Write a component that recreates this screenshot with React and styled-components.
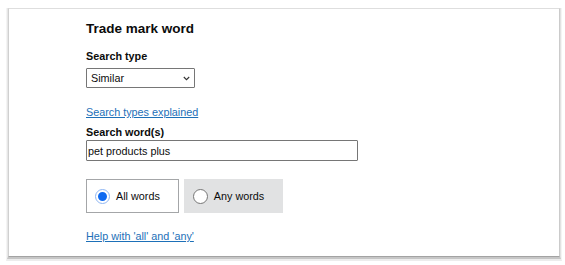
import React from "react";
import styled, { createGlobalStyle } from "styled-components";

const GlobalStyle = createGlobalStyle`
  html, body {
    background: #ffffff;
  }
  body {
    margin: 8px 3px 0 6px;
    font-family: "Liberation Sans", Arial, sans-serif;
    color: #0b0c0c;
  }
`;

const ShadowOuter = styled.div`
  width: 556px;
  box-sizing: border-box;
  border-left: 1px solid #f4f4f4;
  border-right: 1px solid #f4f4f4;
  border-bottom: 2px solid #ececec;
  box-shadow: 0 2px 5px rgba(0, 0, 0, 0.12);
`;

const ShadowInner = styled.div`
  border-left: 1px solid #e6e6e6;
  border-right: 1px solid #e2e2e2;
  border-bottom: 2px solid #c6c6c6;
`;

const Card = styled.div`
  box-sizing: border-box;
  padding: 12px 0 13px 77px;
  background: #ffffff;
  border: 1px solid #dedede;
  border-left-color: #d0d0d0;
  border-right-color: #cbcbcb;
  border-bottom-color: #a3a3a3;
  display: flex;
  flex-direction: column;
  align-items: flex-start;
`;

const Title = styled.h2`
  margin: 0 0 12px;
  font-size: 13.5px;
  line-height: 16px;
  font-weight: 700;
`;

const Label = styled.label`
  display: block;
  margin-top: ${(p) => p.$top || 0}px;
  font-size: 10.8px;
  line-height: 14px;
  font-weight: 700;
`;

const SelectWrap = styled.div`
  position: relative;
  width: 109px;
  height: 20px;
  margin-top: 5px;
`;

const Select = styled.select`
  appearance: none;
  -webkit-appearance: none;
  width: 100%;
  height: 100%;
  box-sizing: border-box;
  margin: 0;
  padding: 0 0 0 4px;
  border: 1px solid #767676;
  border-radius: 1px;
  background: #ffffff;
  color: #0b0c0c;
  font-family: inherit;
  font-size: 10.8px;
  outline: none;
`;

const Chevron = styled.svg`
  position: absolute;
  right: 5px;
  top: 8px;
  width: 7px;
  height: 5px;
  pointer-events: none;
`;

const Link = styled.a`
  display: block;
  margin-top: ${(p) => p.$top || 0}px;
  font-size: 10.8px;
  line-height: 14px;
  color: #1d70b8;
  text-decoration: underline;
  text-underline-offset: 1px;
`;

const TextInput = styled.input`
  width: 272px;
  height: 21px;
  box-sizing: border-box;
  margin: 1px 0 0;
  padding: 0 0 0 1px;
  border: 1px solid #767676;
  border-radius: 1px;
  background: #ffffff;
  color: #0b0c0c;
  font-family: inherit;
  font-size: 10.8px;
  outline: none;
`;

const RadioRow = styled.div`
  display: flex;
  gap: 5px;
  margin-top: 18px;
`;

const RadioOption = styled.label`
  display: flex;
  align-items: center;
  gap: 6px;
  height: 34px;
  box-sizing: border-box;
  padding: 0 18px 0 8px;
  border: 1px solid ${(p) => (p.$checked ? "#a4a6a8" : "transparent")};
  background: ${(p) => (p.$checked ? "#ffffff" : "#e1e2e3")};
  font-size: 10.8px;
  line-height: 14px;
  color: #0b0c0c;
`;

const RadioDot = styled.span`
  width: 15px;
  height: 15px;
  box-sizing: border-box;
  border-radius: 50%;
  border: ${(p) => (p.$checked ? "3px solid #ffffff" : "1px solid #767676")};
  background: ${(p) => (p.$checked ? "#0f6af0" : "#ffffff")};
  flex: none;
  position: relative;

  &::after {
    content: "";
    display: ${(p) => (p.$checked ? "block" : "none")};
    position: absolute;
    inset: -3px;
    border-radius: 50%;
    border: 1px solid #8fb6f3;
  }
`;

const options = [
  { label: "All words", checked: true },
  { label: "Any words", checked: false },
];

export default function App() {
  return (
    <>
      <GlobalStyle />
      <ShadowOuter>
        <ShadowInner>
          <Card>
            <Title>Trade mark word</Title>
            <Label>Search type</Label>
            <SelectWrap>
              <Select defaultValue="similar">
                <option value="similar">Similar</option>
                <option value="exact">Exact</option>
              </Select>
              <Chevron viewBox="0 0 7 5">
                <path d="M0.8 1 L3.5 3.7 L6.2 1" fill="none" stroke="#333" strokeWidth="1.1" />
              </Chevron>
            </SelectWrap>
            <Link href="#" $top={17}>Search types explained</Link>
            <Label $top={6}>Search word(s)</Label>
            <TextInput defaultValue="pet products plus" />
            <RadioRow>
              {options.map((o) => (
                <RadioOption key={o.label} $checked={o.checked}>
                  <RadioDot $checked={o.checked} />
                  {o.label}
                </RadioOption>
              ))}
            </RadioRow>
            <Link href="#" $top={16}>Help with 'all' and 'any'</Link>
          </Card>
        </ShadowInner>
      </ShadowOuter>
    </>
  );
}
